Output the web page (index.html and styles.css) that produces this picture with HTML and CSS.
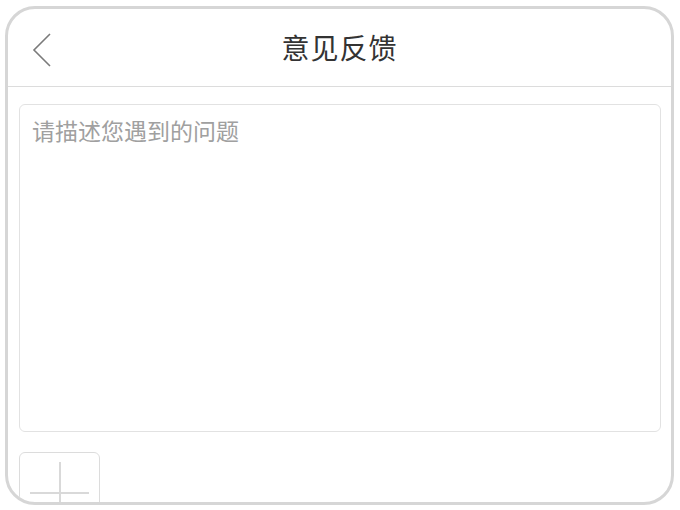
FILE: index.html
```html
<!DOCTYPE html>
<html lang="zh">
<head>
<meta charset="utf-8">
<title>意见反馈</title>
<link rel="stylesheet" href="styles.css">
</head>
<body>
<div class="phone">
  <header class="header">
    <button class="back" aria-label="返回">
      <svg width="20" height="36" viewBox="0 0 20 36"><polyline points="18,2 2,18 18,34" fill="none" stroke="#7a7a7a" stroke-width="1.6"/></svg>
    </button>
    <h1 class="title">意见反馈</h1>
  </header>
  <main class="content">
    <textarea class="input" placeholder="请描述您遇到的问题"></textarea>
    <div class="upload">
      <span class="plus-h"></span>
      <span class="plus-v"></span>
    </div>
  </main>
</div>
</body>
</html>
```
FILE: styles.css
```css
html, body {
  margin: 0;
  padding: 0;
  background: #fff;
}
body {
  font-family: "Noto Sans CJK SC", "Noto Sans", sans-serif;
  padding: 6px 6px 5px 5px;
}
.phone {
  box-sizing: border-box;
  width: 669px;
  height: 499px;
  border: 3px solid #d6d6d6;
  border-radius: 30px;
  overflow: hidden;
  background: #fff;
  display: flex;
  flex-direction: column;
}
.header {
  position: relative;
  height: 77px;
  border-bottom: 1px solid #dcdcdc;
  display: flex;
  align-items: center;
  justify-content: center;
  flex: none;
}
.back {
  position: absolute;
  left: 24px;
  top: 23px;
  padding: 0;
  border: 0;
  background: none;
  display: flex;
}
.title {
  margin: 0;
  font-size: 28px;
  font-weight: 400;
  color: #333;
  letter-spacing: 1px;
  margin-top: -2px;
}
.content {
  padding: 17px 10px 0 11px;
  display: flex;
  flex-direction: column;
  gap: 20px;
}
.input {
  box-sizing: border-box;
  height: 328px;
  width: 100%;
  border: 1px solid #e2e2e2;
  border-radius: 6px;
  padding: 9px 12px;
  resize: none;
  font-family: "Noto Sans CJK SC", sans-serif;
  font-size: 23px;
  line-height: 32px;
  color: #333;
  outline: none;
}
.input::placeholder {
  color: #a0a0a0;
}
.upload {
  position: relative;
  box-sizing: border-box;
  width: 81px;
  height: 81px;
  border: 1px solid #dcdcdc;
  border-radius: 6px;
  flex: none;
}
.plus-h {
  position: absolute;
  left: 10px;
  top: 39px;
  width: 59px;
  height: 2px;
  background: #d9d9d9;
}
.plus-v {
  position: absolute;
  left: 39px;
  top: 9px;
  width: 2px;
  height: 62px;
  background: #d9d9d9;
}
```
